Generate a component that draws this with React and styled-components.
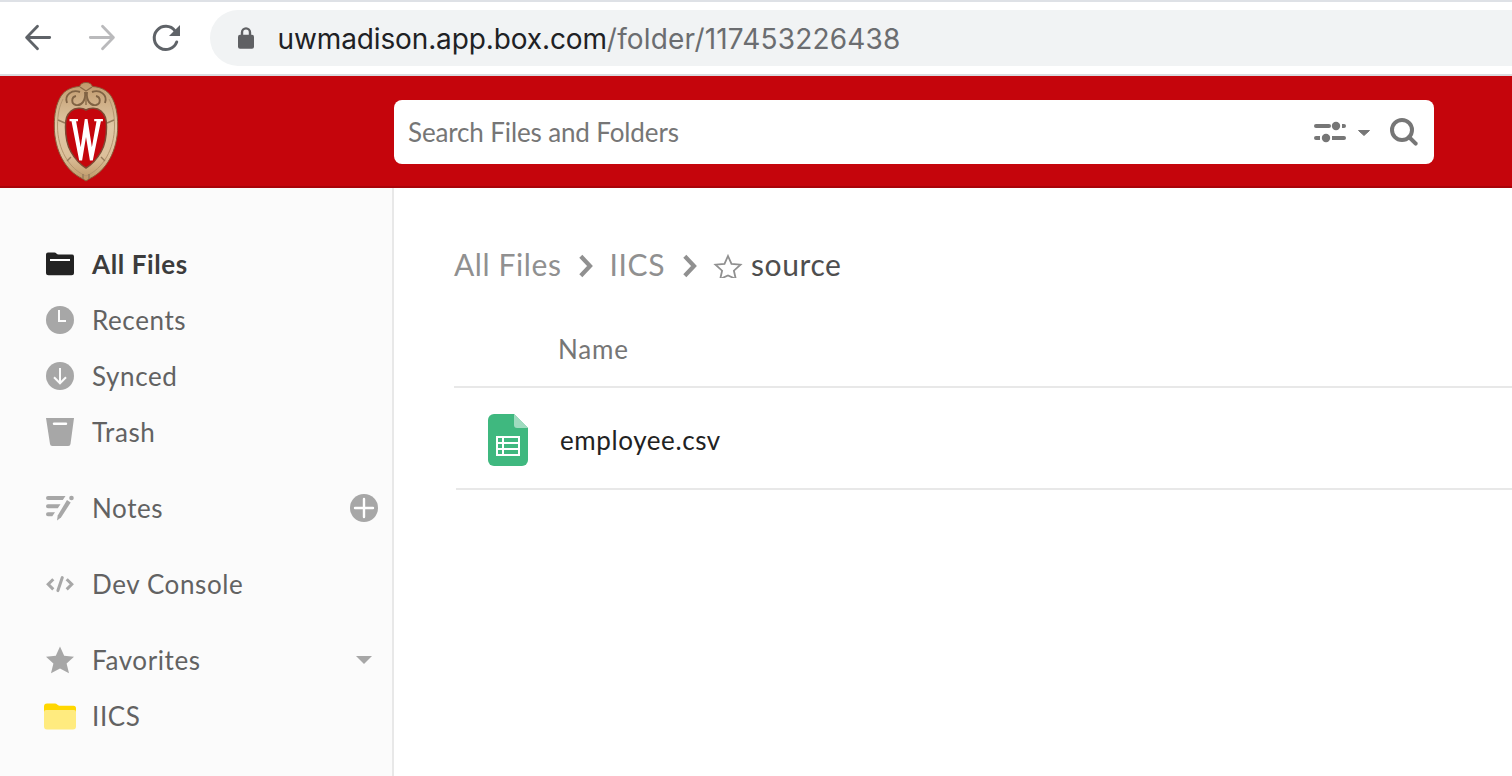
import React from "react";
import styled, { createGlobalStyle } from "styled-components";

const GlobalStyle = createGlobalStyle`
  *, *::before, *::after { box-sizing: border-box; }
  body { margin: 0; background: #fff; overflow: hidden; }
  svg { display: block; flex: none; }
`;

const Page = styled.div`
  display: flex;
  flex-direction: column;
  width: 100%;
  height: 776px;
  overflow: hidden;
  background: #fff;
  color: #5e5e5e;
  font-family: Lato, "Liberation Sans", sans-serif;
  font-size: 26px;
  line-height: 32px;
`;

const BrowserBar = styled.div`
  flex: none;
  display: flex;
  align-items: center;
  height: 76px;
  padding-left: 22px;
  border-top: 2px solid #dee1e6;
  border-bottom: 2px solid #dadce0;
`;

const NavButtons = styled.div`
  display: flex;
  gap: 32px;
  width: 188px;
`;

const AddressBar = styled.div`
  flex: 1;
  display: flex;
  align-items: center;
  gap: 20.5px;
  height: 56px;
  padding-left: 25px;
  border-radius: 28px 0 0 28px;
  background: #f1f3f4;
`;

const Url = styled.div`
  padding-top: 1px;
  font-family: Inter, "Liberation Sans", sans-serif;
  font-size: 28px;
  line-height: 34px;
  white-space: nowrap;
`;

const UrlPart = styled.span`
  color: ${(p) => (p.$muted ? "#6b6d70" : "#202124")};
  letter-spacing: ${(p) => p.$tracking}px;
`;

const Header = styled.header`
  flex: none;
  display: flex;
  height: 112px;
  padding: 4px 78px 0 52px;
  background: #c5050c;
  border-bottom: 2px solid #a8040a;
`;

const LogoSlot = styled.div`
  width: 342px;
`;

const SearchBox = styled.div`
  flex: 1;
  display: flex;
  align-items: center;
  height: 64px;
  margin-top: 20px;
  padding: 0 15px 0 14px;
  border-radius: 8px;
  background: #fff;
  color: #767676;
`;

const SearchText = styled.span`
  flex: 1;
  letter-spacing: ${(p) => p.$tracking}px;
`;

const SearchTools = styled.div`
  display: flex;
  align-items: center;
  gap: 10px;
`;

const SearchButton = styled.span`
  margin-left: 8px;
`;

const Body = styled.div`
  flex: 1;
  display: flex;
  min-height: 0;
`;

const Sidebar = styled.nav`
  flex: none;
  display: flex;
  flex-direction: column;
  gap: 20px;
  width: 394px;
  padding: 48px 12px 0 44px;
  background: #fbfbfb;
  border-right: 2px solid #e8e8e8;
`;

const NavGroup = styled.div`
  display: flex;
  flex-direction: column;
`;

const NavItem = styled.div`
  display: flex;
  align-items: center;
  gap: 16px;
  height: 56px;
  color: ${(p) => (p.$active ? "#3c3c3c" : "#626262")};
  font-weight: ${(p) => (p.$active ? 700 : 400)};
`;

const NavLabel = styled.span`
  flex: 1;
  white-space: nowrap;
  letter-spacing: 0.6px;
`;

const Main = styled.main`
  flex: 1;
  padding: 58px 0 0 60px;
`;

const Breadcrumbs = styled.div`
  display: flex;
  align-items: center;
  height: 40px;
  font-size: 30px;
  line-height: 40px;
  color: #909090;
  white-space: nowrap;
`;

const Crumb = styled.span`
  width: ${(p) => p.$width}px;
  padding-bottom: 4px;
  letter-spacing: 0.6px;
  color: ${(p) => (p.$current ? "#4e4e4e" : "inherit")};
`;

const CrumbIcon = styled.span`
  width: ${(p) => p.$width}px;
`;

const ColumnHeader = styled.div`
  display: flex;
  align-items: flex-end;
  height: 102px;
  padding: 0 0 21px 104px;
  border-bottom: 2px solid #e8e8e8;
  color: #767676;
  letter-spacing: 0.8px;
`;

const FileRow = styled.div`
  display: flex;
  align-items: center;
  gap: 32px;
  height: 102px;
  margin-left: 2px;
  padding: 4px 0 0 32px;
  border-bottom: 2px solid #e8e8e8;
  color: #222;
`;

const FileName = styled.span`
  letter-spacing: 0.6px;
`;

const BackIcon = () => (
  <svg width="32" height="32" viewBox="0 0 32 32" fill="none" stroke="#5f6368" strokeWidth="2.8" strokeLinecap="round" strokeLinejoin="round">
    <path d="M27.700 15.500H5M15.500 4.300 4.600 15.500 15.500 26.700" />
  </svg>
);

const ForwardIcon = () => (
  <svg width="32" height="32" viewBox="0 0 32 32" fill="none" stroke="#bababc" strokeWidth="2.8" strokeLinecap="round" strokeLinejoin="round">
    <path d="M4.300 15.500h23M16.500 4.300 27.400 15.500 16.500 26.700" />
  </svg>
);

const ReloadIcon = () => (
  <svg width="32" height="32" viewBox="0 0 32 32">
    <path d="M26.700 20A11.600 11.600 0 1 1 25 8.800" fill="none" stroke="#5f6368" strokeWidth="3" strokeLinecap="round" />
    <path d="M30 3V14H19Z" fill="#5f6368" />
  </svg>
);

const LockIcon = () => (
  <svg width="22" height="24" viewBox="0 0 22 24">
    <path d="M7 9V6.400a4 4 0 0 1 8 0V9" fill="none" stroke="#5f6063" strokeWidth="2.4" />
    <rect x="3" y="8.800" width="16" height="14" rx="2" fill="#5f6063" />
  </svg>
);

const Crest = () => (
  <svg width="68" height="104" viewBox="52 80 68 104">
    <defs>
      <linearGradient id="stone" x1="0" y1="0" x2="0" y2="1">
        <stop offset="0" stopColor="#c19a6c" />
        <stop offset="0.45" stopColor="#e0c8a6" />
        <stop offset="0.75" stopColor="#dcc09a" />
        <stop offset="1" stopColor="#bd9665" />
      </linearGradient>
    </defs>
    <path d="M86 82.500c3.500 0 5.500 1.500 6.500 4 8 .5 14.500 3.500 18.500 9.500 5 8 6.700 18 6.700 30 0 25-11.700 45-27.700 52.500L86 181l-4-2.500C66 171 54.300 151 54.300 126c0-12 1.700-22 6.700-30 4-6 10.500-9 18.500-9.500 1-2.500 3-4 6.500-4Z" fill="url(#stone)" stroke="#8a5a38" strokeWidth="1" />
    <path d="M63 99c-3.500 7-5.500 15-5.500 27 0 23 11.500 43 28.500 50 17-7 28.500-27 28.500-50 0-12-2-20-5.500-27" fill="none" stroke="#b3956f" strokeWidth="1" />
    <path d="M85 92c1 8-3 14-9 13-5-1-5-8 0-9M87 92c-1 8 3 14 9 13 5-1 5-8 0-9M80 92c-8-3-16 3-13 11M92 92c8-3 16 3 13 11" fill="none" stroke="#806344" strokeWidth="1.900" />
    <path d="M86 96v9M80 87l6 4 6-4" fill="none" stroke="#8a6b49" strokeWidth="1.400" />
    <path d="M58 120l7 3M114 120l-7 3M67 161l4-4M105 161l-4-4M83 174v5M89 174v5" stroke="#957b5b" strokeWidth="1.400" />
    <path d="M86 110c-3.500-2.300-11-2.500-15 1-4.500 4-5.500 8-5.500 16 0 9 1.500 18 5.500 25 4 7 9 12.500 15 16 6-3.500 11-9 15-16 4-7 5.500-16 5.500-25 0-8-1-12-5.500-16-4-3.500-11.500-3.300-15-1Z" fill="#c5050c" stroke="#7d4a34" strokeWidth="1.500" />
    <path d="M69.500 119h8.500v2.300h-1.900l4.600 26 4.100-28.300h2.700l4.400 28.300 4.600-26h-2.300V119h8.700v2.300h-2L92.800 160.500h-2.900L86 137l-3.900 23.500h-2.900L71.500 121.300h-2Z" fill="#fff" />
  </svg>
);

const FilterIcon = () => (
  <svg width="34" height="24" viewBox="0 0 34 24" fill="#767676">
    <rect x="1" y="4" width="17" height="4" rx="2" />
    <circle cx="23" cy="6" r="4.200" />
    <path d="M29 4h2a2 2 0 0 1 0 4h-2ZM3 16h4v4H3a2 2 0 0 1 0-4Z" />
    <circle cx="13" cy="18" r="4.200" />
    <path d="M19 16h12a2 2 0 0 1 0 4H19Z" />
  </svg>
);

const SearchCaret = () => (
  <svg width="14" height="8" viewBox="0 0 14 8">
    <path d="M1.500 2.500h11L7 7.500Z" fill="#767676" stroke="#767676" strokeLinejoin="round" />
  </svg>
);

const SearchIcon = () => (
  <svg width="30" height="30" viewBox="0 0 30 30" fill="none" stroke="#767676" strokeWidth="4">
    <circle cx="13" cy="13" r="10" />
    <path d="m20 20 6.700 6.700" strokeLinecap="round" />
  </svg>
);

const FolderIcon = () => (
  <svg width="32" height="32" viewBox="0 0 32 32">
    <path d="M4 4.600h6.500c1.500 0 2.300 2 4 2H28a2 2 0 0 1 2 2v16.200a2.500 2.500 0 0 1-2.500 2.500h-23A2.500 2.500 0 0 1 2 24.800V6.600a2 2 0 0 1 2-2Z" fill="#222" />
    <path d="M6 12h20" stroke="#fff" strokeWidth="2" />
  </svg>
);

const ClockIcon = () => (
  <svg width="32" height="32" viewBox="0 0 32 32">
    <circle cx="16" cy="16" r="14" fill="#a7a7a7" />
    <path d="M15 6v11h7" fill="none" stroke="#fbfbfb" strokeWidth="2" />
  </svg>
);

const SyncedIcon = () => (
  <svg width="32" height="32" viewBox="0 0 32 32">
    <circle cx="16" cy="16" r="14" fill="#a7a7a7" />
    <path d="M16 8v15M10 17.300l6 6 6-6" fill="none" stroke="#fbfbfb" strokeWidth="2" />
  </svg>
);

const TrashIcon = () => (
  <svg width="32" height="32" viewBox="0 0 32 32">
    <path d="M2 2h28l-3.500 26a2.300 2.300 0 0 1-2.300 2H8.300A2.300 2.300 0 0 1 6 28Z" fill="#a7a7a7" />
    <path d="M10 7.800h12" stroke="#fff" strokeWidth="2.400" strokeLinecap="round" />
  </svg>
);

const NotesIcon = () => (
  <svg width="32" height="32" viewBox="0 0 32 32" fill="#a7a7a7">
    <path d="M4 4h17.500l-2.700 4H4a2 2 0 0 1 0-4ZM4 12.300h12.500l-2.700 4H4a2 2 0 0 1 0-4ZM4 20.300h7l-2.700 4H4a2 2 0 0 1 0-4Z" />
    <path d="m23 8 3.700 2.500-9.700 15-4 3 .7-5Z" />
    <circle cx="27.500" cy="6" r="2.300" />
  </svg>
);

const CodeIcon = () => (
  <svg width="32" height="32" viewBox="0 0 32 32" fill="none" stroke="#a7a7a7" strokeWidth="3">
    <path d="M9.300 11.200 4.200 16.300l5.100 5.100M22.700 11.200l5.100 5.100-5.100 5.100" />
    <path d="m18.300 9.600-4.400 13" strokeLinecap="round" />
  </svg>
);

const StarIcon = () => (
  <svg width="32" height="32" viewBox="0 0 32 32">
    <path d="m16 2.600 4.200 9.100 9.800 1-7.400 6.800L25 29.200l-9-4.600-9 4.600 2.400-9.700L2 12.700l9.800-1Z" fill="#a7a7a7" />
  </svg>
);

const YellowFolderIcon = () => (
  <svg width="32" height="32" viewBox="0 0 32 32">
    <path d="M3 3.500h8c1.800 0 2.500 2.200 4.300 2.200H29.500A2.500 2.500 0 0 1 32 8.200V13H0V6.500a3 3 0 0 1 3-3Z" fill="#ffd700" />
    <path d="M2 10h28a2 2 0 0 1 2 2v14.500a3 3 0 0 1-3 3H3a3 3 0 0 1-3-3V12a2 2 0 0 1 2-2Z" fill="#ffeb7f" />
  </svg>
);

const AddIcon = () => (
  <svg width="32" height="32" viewBox="0 0 32 32">
    <circle cx="16" cy="16" r="14" fill="#a7a7a7" />
    <path d="M16 7v18M7 16h18" stroke="#fff" strokeWidth="2.400" strokeLinecap="round" />
  </svg>
);

const ExpandIcon = () => (
  <svg width="32" height="32" viewBox="0 0 32 32">
    <path d="M8 12h16l-8 8Z" fill="#a7a7a7" />
  </svg>
);

const ChevronIcon = () => (
  <svg width="16" height="24" viewBox="0 0 16 24" fill="none" stroke="#909090" strokeWidth="4.200">
    <path d="m1.800 2.300 9.200 9.700-9.200 9.700" />
  </svg>
);

const FavoriteIcon = () => (
  <svg width="30" height="24" viewBox="0 0 30 24" fill="none" stroke="#909090" strokeWidth="1.800">
    <path d="m15 2 3.500 7.900 9 .8-6.600 6 1.900 8.300-7.800-3.600L7.200 25l1.900-8.300-6.600-6 9-.8Z" />
  </svg>
);

const SheetIcon = () => (
  <svg width="40" height="52" viewBox="0 0 40 52">
    <path d="M6 0h20l14 14v32a6 6 0 0 1-6 6H6a6 6 0 0 1-6-6V6a6 6 0 0 1 6-6Z" fill="#3fb87f" />
    <path d="M26 0l14 14H29a3 3 0 0 1-3-3Z" fill="#9fdbbf" />
    <path d="M9 23h22v18H9ZM9 29h22M9 35h22M15 23v18" fill="none" stroke="#fff" strokeWidth="2" />
  </svg>
);

const navGroups = [
  [
    { label: "All Files", Icon: FolderIcon, active: true },
    { label: "Recents", Icon: ClockIcon },
    { label: "Synced", Icon: SyncedIcon },
    { label: "Trash", Icon: TrashIcon },
  ],
  [{ label: "Notes", Icon: NotesIcon, Action: AddIcon }],
  [{ label: "Dev Console", Icon: CodeIcon }],
  [
    { label: "Favorites", Icon: StarIcon, Action: ExpandIcon },
    { label: "IICS", Icon: YellowFolderIcon },
  ],
];

export default function App() {
  return (
    <Page>
      <GlobalStyle />
      <BrowserBar>
        <NavButtons>
          <BackIcon />
          <ForwardIcon />
          <ReloadIcon />
        </NavButtons>
        <AddressBar>
          <LockIcon />
          <Url>
            <UrlPart $tracking={-0.12}>uwmadison.app.box.com</UrlPart>
            <UrlPart $muted $tracking={0.18}>/folder/117453226438</UrlPart>
          </Url>
        </AddressBar>
      </BrowserBar>
      <Header>
        <LogoSlot><Crest /></LogoSlot>
        <SearchBox>
          <SearchText $tracking={-0.13}>Search Files and Folders</SearchText>
          <SearchTools>
            <FilterIcon />
            <SearchCaret />
            <SearchButton><SearchIcon /></SearchButton>
          </SearchTools>
        </SearchBox>
      </Header>
      <Body>
        <Sidebar>
          {navGroups.map((items) => (
            <NavGroup key={items[0].label}>
              {items.map(({ label, Icon, Action, active }) => (
                <NavItem key={label} $active={active}>
                  <Icon />
                  <NavLabel>{label}</NavLabel>
                  {Action && <Action />}
                </NavItem>
              ))}
            </NavGroup>
          ))}
        </Sidebar>
        <Main>
          <Breadcrumbs>
            <Crumb $width={124.5}>All Files</Crumb>
            <CrumbIcon $width={31}><ChevronIcon /></CrumbIcon>
            <Crumb $width={73}>IICS</Crumb>
            <CrumbIcon $width={30.5}><ChevronIcon /></CrumbIcon>
            <CrumbIcon $width={38}><FavoriteIcon /></CrumbIcon>
            <Crumb $current>source</Crumb>
          </Breadcrumbs>
          <ColumnHeader>Name</ColumnHeader>
          <FileRow>
            <SheetIcon />
            <FileName>employee.csv</FileName>
          </FileRow>
        </Main>
      </Body>
    </Page>
  );
}
